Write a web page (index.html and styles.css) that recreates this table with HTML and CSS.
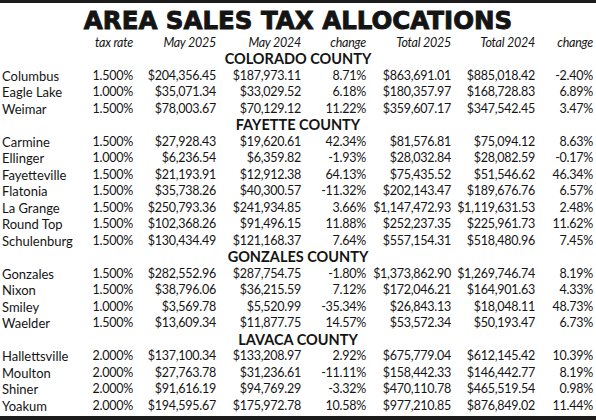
FILE: index.html
```html
<!DOCTYPE html>
<html lang="en">
<head>
  <meta charset="UTF-8">
  <meta name="viewport" content="width=device-width, initial-scale=1.0">
  <title>Area Sales Tax Allocations</title>
  <link rel="stylesheet" href="styles.css">
</head>
<body>
  <div class="sheet">
    <h1 class="title">AREA SALES TAX ALLOCATIONS</h1>
    <table class="alloc">
      <colgroup>
        <col class="c-name"><col class="c-rate"><col class="c-money"><col class="c-money2">
        <col class="c-chg"><col class="c-money2"><col class="c-tot24"><col class="c-chg2">
      </colgroup>
      <thead>
        <tr>
          <th></th><th>tax rate</th><th>May 2025</th><th>May 2024</th>
          <th>change</th><th>Total 2025</th><th>Total 2024</th><th>change</th>
        </tr>
      </thead>
      <tbody>
        <tr class="county"><td colspan="8">COLORADO COUNTY</td></tr>
        <tr><td>Columbus</td><td>1.500%</td><td>$204,356.45</td><td>$187,973.11</td><td>8.71%</td><td>$863,691.01</td><td>$885,018.42</td><td>-2.40%</td></tr>
        <tr><td>Eagle Lake</td><td>1.000%</td><td>$35,071.34</td><td>$33,029.52</td><td>6.18%</td><td>$180,357.97</td><td>$168,728.83</td><td>6.89%</td></tr>
        <tr><td>Weimar</td><td>1.500%</td><td>$78,003.67</td><td>$70,129.12</td><td>11.22%</td><td>$359,607.17</td><td>$347,542.45</td><td>3.47%</td></tr>

        <tr class="county"><td colspan="8">FAYETTE COUNTY</td></tr>
        <tr><td>Carmine</td><td>1.500%</td><td>$27,928.43</td><td>$19,620.61</td><td>42.34%</td><td>$81,576.81</td><td>$75,094.12</td><td>8.63%</td></tr>
        <tr><td>Ellinger</td><td>1.000%</td><td>$6,236.54</td><td>$6,359.82</td><td>-1.93%</td><td>$28,032.84</td><td>$28,082.59</td><td>-0.17%</td></tr>
        <tr><td>Fayetteville</td><td>1.500%</td><td>$21,193.91</td><td>$12,912.38</td><td>64.13%</td><td>$75,435.52</td><td>$51,546.62</td><td>46.34%</td></tr>
        <tr><td>Flatonia</td><td>1.500%</td><td>$35,738.26</td><td>$40,300.57</td><td>-11.32%</td><td>$202,143.47</td><td>$189,676.76</td><td>6.57%</td></tr>
        <tr><td>La Grange</td><td>1.500%</td><td>$250,793.36</td><td>$241,934.85</td><td>3.66%</td><td>$1,147,472.93</td><td>$1,119,631.53</td><td>2.48%</td></tr>
        <tr><td>Round Top</td><td>1.500%</td><td>$102,368.26</td><td>$91,496.15</td><td>11.88%</td><td>$252,237.35</td><td>$225,961.73</td><td>11.62%</td></tr>
        <tr><td>Schulenburg</td><td>1.500%</td><td>$130,434.49</td><td>$121,168.37</td><td>7.64%</td><td>$557,154.31</td><td>$518,480.96</td><td>7.45%</td></tr>

        <tr class="county"><td colspan="8">GONZALES COUNTY</td></tr>
        <tr><td>Gonzales</td><td>1.500%</td><td>$282,552.96</td><td>$287,754.75</td><td>-1.80%</td><td>$1,373,862.90</td><td>$1,269,746.74</td><td>8.19%</td></tr>
        <tr><td>Nixon</td><td>1.500%</td><td>$38,796.06</td><td>$36,215.59</td><td>7.12%</td><td>$172,046.21</td><td>$164,901.63</td><td>4.33%</td></tr>
        <tr><td>Smiley</td><td>1.000%</td><td>$3,569.78</td><td>$5,520.99</td><td>-35.34%</td><td>$26,843.13</td><td>$18,048.11</td><td>48.73%</td></tr>
        <tr><td>Waelder</td><td>1.500%</td><td>$13,609.34</td><td>$11,877.75</td><td>14.57%</td><td>$53,572.34</td><td>$50,193.47</td><td>6.73%</td></tr>

        <tr class="county"><td colspan="8">LAVACA COUNTY</td></tr>
        <tr><td>Hallettsville</td><td>2.000%</td><td>$137,100.34</td><td>$133,208.97</td><td>2.92%</td><td>$675,779.04</td><td>$612,145.42</td><td>10.39%</td></tr>
        <tr><td>Moulton</td><td>2.000%</td><td>$27,763.78</td><td>$31,236.61</td><td>-11.11%</td><td>$158,442.33</td><td>$146,442.77</td><td>8.19%</td></tr>
        <tr><td>Shiner</td><td>2.000%</td><td>$91,616.19</td><td>$94,769.29</td><td>-3.32%</td><td>$470,110.78</td><td>$465,519.54</td><td>0.98%</td></tr>
        <tr><td>Yoakum</td><td>2.000%</td><td>$194,595.67</td><td>$175,972.78</td><td>10.58%</td><td>$977,210.85</td><td>$876,849.02</td><td>11.44%</td></tr>
      </tbody>
    </table>
  </div>
</body>
</html>
```

FILE: styles.css
```css
body {
  margin: 0;
  background: #fff;
  color: #141414;
  font-family: Lato, "Open Sans", sans-serif;
}
.sheet {
  width: 596px;
  height: 420px;
  box-sizing: border-box;
  border-top: 3px solid #1c1c1c;
  border-bottom: 4px solid #1c1c1c;
}
.title {
  margin: 0;
  padding-top: 5px;
  height: 26.5px;
  line-height: 25px;
  text-align: center;
  font-family: "DejaVu Sans", sans-serif;
  font-weight: bold;
  font-size: 24.5px;
  -webkit-text-stroke: 0.9px #141414;
}
.alloc {
  width: 596px;
  table-layout: fixed;
  border-collapse: collapse;
  font-size: 12.5px;
  letter-spacing: -0.25px;
}
.c-name { width: 80px; }
.c-rate { width: 53px; }
.c-money { width: 83px; }
.c-money2 { width: 85px; }
.c-chg { width: 65px; }
.c-tot24 { width: 84px; }
.c-chg2 { width: 61px; }
.alloc th,
.alloc td {
  padding: 0;
  height: 16.5px;
  line-height: 16.5px;
  text-align: right;
  white-space: nowrap;
}
.alloc th {
  font-weight: normal;
  font-style: italic;
}
.alloc td:first-child {
  text-align: left;
  padding-left: 2px;
  font-size: 13px;
  letter-spacing: 0;
}
.alloc td:last-child,
.alloc th:last-child {
  padding-right: 3px;
}
.alloc .county td {
  text-align: center;
  font-weight: bold;
  font-size: 14.5px;
  letter-spacing: 0;
  padding: 0;
}
```
